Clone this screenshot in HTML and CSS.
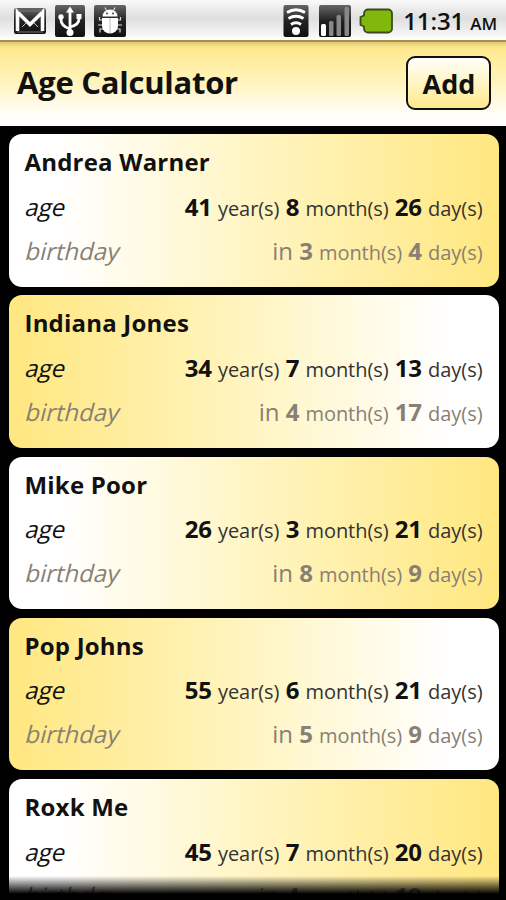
FILE: index.html
```html
<!DOCTYPE html>
<html lang="en">
<head>
  <meta charset="UTF-8" />
  <title>Age Calculator</title>
  <link rel="stylesheet" href="styles.css">
</head>
<body>
  <!-- Phone status bar -->
  <div class="status-bar">
    <div class="notifications">
      <svg width="34" height="28" viewBox="0 0 34 28">
        <rect x="1" y="1" width="32" height="26" rx="2" fill="url(#dark)"/>
        <path d="M4.500 24V5L17 17.500 29.500 5V24" fill="none" stroke="#fff" stroke-width="3.600"/>
        <path d="M4 25h26M5 4h24" fill="none" stroke="#777" stroke-width="1"/>
        <path d="M9 20l4-4M25 20l-4-4" fill="none" stroke="#bbb" stroke-width="1"/>
        <defs>
          <linearGradient id="dark" x2="0" y2="1">
            <stop offset="0" stop-color="#666"/>
            <stop offset=".5" stop-color="#222"/>
            <stop offset="1" stop-color="#111"/>
          </linearGradient>
        </defs>
      </svg>
      <svg width="32" height="34" viewBox="0 0 32 34">
        <rect x="1" y="1" width="30" height="32" rx="2" fill="url(#dark)"/>
        <path d="M16 28V6M16 25q-9-3-9-9v-2M16 23q9-2 9-8v-2" fill="none" stroke="#fff" stroke-width="2.800"/>
        <path d="M12 8.500L16 2.500 20 8.500z" fill="#fff"/>
        <circle cx="16" cy="28.500" r="3.500" fill="#fff"/>
        <circle cx="7" cy="13" r="2.700" fill="#fff"/>
        <rect x="22.500" y="10" width="5" height="5" fill="#fff"/>
      </svg>
      <svg width="34" height="34" viewBox="0 0 34 34">
        <rect x="1" y="1" width="32" height="32" rx="2" fill="url(#dark)"/>
        <path d="M9.500 12.500a7.500 7 0 0 1 15 0z" fill="#fff"/>
        <path d="M12 3.500l2 4M22 3.500l-2 4M10 16H6.500v-3M10 21H5M11 25H7v3.500M24 16h3.500v-3M24 21h5M23 25h4v3.500" fill="none" stroke="#ddd" stroke-width="1.200"/>
        <path d="M9 14h16v8a8 7.500 0 0 1-16 0z" fill="#fff"/>
        <path d="M17 14v15" stroke="#bbb" stroke-width="1"/>
        <circle cx="14" cy="9.500" r=".9" fill="#333"/>
        <circle cx="20" cy="9.500" r=".9" fill="#333"/>
      </svg>
    </div>
    <div class="system">
      <svg width="26" height="34" viewBox="0 0 26 34">
        <rect x=".5" y="1" width="25" height="32" rx="2" fill="url(#dark)"/>
        <circle cx="13" cy="27" r="4" fill="#fff"/>
        <path d="M8 20.500q5-3.500 10 0M5.500 14.500q7.500-4.500 15 0M4 8.500q9-5.500 18 0" fill="none" stroke="#fff" stroke-width="2.800"/>
      </svg>
      <svg class="signal" width="34" height="34" viewBox="0 0 34 34">
        <rect x="1" y="1" width="32" height="32" rx="2" fill="url(#dark)"/>
        <rect x="3" y="20" width="5" height="12" rx="1.500" fill="#fff"/>
        <rect x="11" y="17" width="4.500" height="15" rx="1.500" fill="#888"/>
        <rect x="18.500" y="11" width="4.500" height="21" rx="1.500" fill="#888"/>
        <rect x="26.500" y="3" width="4.500" height="29" rx="1.500" fill="#888"/>
      </svg>
      <svg class="battery" width="34" height="26" viewBox="0 0 34 26">
        <path d="M9 1.500h20a4 4 0 0 1 4 4v15a4 4 0 0 1-4 4H9a4 4 0 0 1-4-4V18.500L1.500 17V9L5 7.500V5.500a4 4 0 0 1 4-4z" fill="#80b80b" stroke="#3c4a1c" stroke-width="1.800"/>
      </svg>
      <div class="clock">11:31 <span>AM</span></div>
    </div>
  </div>

  <div class="header">
    <h1>Age Calculator</h1>
    <button>Add</button>
  </div>

  <!-- People list -->
  <div class="list">
    <div class="card">
      <h2>Andrea Warner</h2>
      <div class="row"><i>age</i><p><b>41</b> <small>year(s)</small> <b>8</b> <small>month(s)</small> <b>26</b> <small>day(s)</small></p></div>
      <div class="row birthday"><i>birthday</i><p>in <b>3</b> <small>month(s)</small> <b>4</b> <small>day(s)</small></p></div>
    </div>
    <div class="card">
      <h2>Indiana Jones</h2>
      <div class="row"><i>age</i><p><b>34</b> <small>year(s)</small> <b>7</b> <small>month(s)</small> <b>13</b> <small>day(s)</small></p></div>
      <div class="row birthday"><i>birthday</i><p>in <b>4</b> <small>month(s)</small> <b>17</b> <small>day(s)</small></p></div>
    </div>
    <div class="card">
      <h2>Mike Poor</h2>
      <div class="row"><i>age</i><p><b>26</b> <small>year(s)</small> <b>3</b> <small>month(s)</small> <b>21</b> <small>day(s)</small></p></div>
      <div class="row birthday"><i>birthday</i><p>in <b>8</b> <small>month(s)</small> <b>9</b> <small>day(s)</small></p></div>
    </div>
    <div class="card">
      <h2>Pop Johns</h2>
      <div class="row"><i>age</i><p><b>55</b> <small>year(s)</small> <b>6</b> <small>month(s)</small> <b>21</b> <small>day(s)</small></p></div>
      <div class="row birthday"><i>birthday</i><p>in <b>5</b> <small>month(s)</small> <b>9</b> <small>day(s)</small></p></div>
    </div>
    <div class="card">
      <h2>Roxk Me</h2>
      <div class="row"><i>age</i><p><b>45</b> <small>year(s)</small> <b>7</b> <small>month(s)</small> <b>20</b> <small>day(s)</small></p></div>
      <div class="row birthday"><i>birthday</i><p>in <b>4</b> <small>month(s)</small> <b>19</b> <small>day(s)</small></p></div>
    </div>
    <div class="fade"></div>
  </div>
</body>
</html>
```
FILE: styles.css
```css
* {
  box-sizing: border-box;
}

body {
  margin: 0;
  height: 900px;
  overflow: hidden;
  display: flex;
  flex-direction: column;
  background: #000;
  color: #111;
  font-family: "Open Sans", "Noto Sans", sans-serif;
}

h1, h2, p {
  margin: 0;
}

/* Status bar */
.status-bar {
  height: 42px;
  flex: none;
  display: flex;
  justify-content: space-between;
  padding: 3px 9px 0 13px;
  background: linear-gradient(#fafafa, #dedede 45%, #f4f4f4 85%, #fff);
  border-bottom: 2px solid #a3924a;
}

.notifications, .system {
  display: flex;
  align-items: center;
  height: 35px;
}

.notifications {
  gap: 7px;
}

.signal {
  margin-left: 9px;
}

.battery {
  margin-left: 7px;
}

.clock {
  margin-left: 10px;
  font-size: 24px;
  font-weight: 600;
  letter-spacing: -0.1px;
  white-space: nowrap;
}

.clock span {
  font-size: 17px;
}

/* Title bar */
.header {
  height: 84px;
  flex: none;
  display: flex;
  justify-content: space-between;
  padding: 14px 15px 0 17px;
  background: linear-gradient(#e0c878, #ffe98f 7%, #fff3b8 45%, #fffef8 85%, #fff);
}

h1 {
  font-size: 31px;
  line-height: 52px;
  letter-spacing: -0.25px;
  white-space: nowrap;
}

button {
  width: 85px;
  height: 54px;
  padding: 0 0 0 1px;
  border: 2px solid #111;
  border-radius: 9px;
  background: linear-gradient(#fffefa, #fff5c4 50%, #ffe98a);
  color: #111;
  font: bold 27px "Open Sans", sans-serif;
}

/* Cards */
.list {
  position: relative;
  flex: 1;
  overflow: hidden;
  padding: 8px 7.500px 0 8.500px;
}

.card {
  height: 152.500px;
  margin-bottom: 8.800px;
  padding: 12px 16px 0;
  border-radius: 13px;
  background: linear-gradient(90deg, #fff 10%, #fff5c2 50%, #ffe780);
}

.card:nth-child(even) {
  background: linear-gradient(90deg, #ffe780, #fff5c2 50%, #fff 90%);
}

h2 {
  font-size: 24px;
  line-height: 32px;
  letter-spacing: 0.2px;
  white-space: nowrap;
}

.row {
  display: flex;
  justify-content: space-between;
  height: 44px;
  line-height: 44px;
  padding-top: 6.500px;
  font-size: 24px;
  white-space: nowrap;
}

/* slanted upright letters, not the italic face */
.row i {
  margin-left: 2px;
  font-style: normal;
  transform: skewX(-14deg);
}

.row b {
  letter-spacing: -0.2px;
}

.row small {
  font-size: 20px;
  letter-spacing: -0.05px;
  color: #333;
}

.birthday, .birthday small {
  color: #888074;
}

.fade {
  position: absolute;
  left: 0;
  right: 0;
  bottom: 0;
  height: 24px;
  background: linear-gradient(transparent, #000 75%);
}
```
